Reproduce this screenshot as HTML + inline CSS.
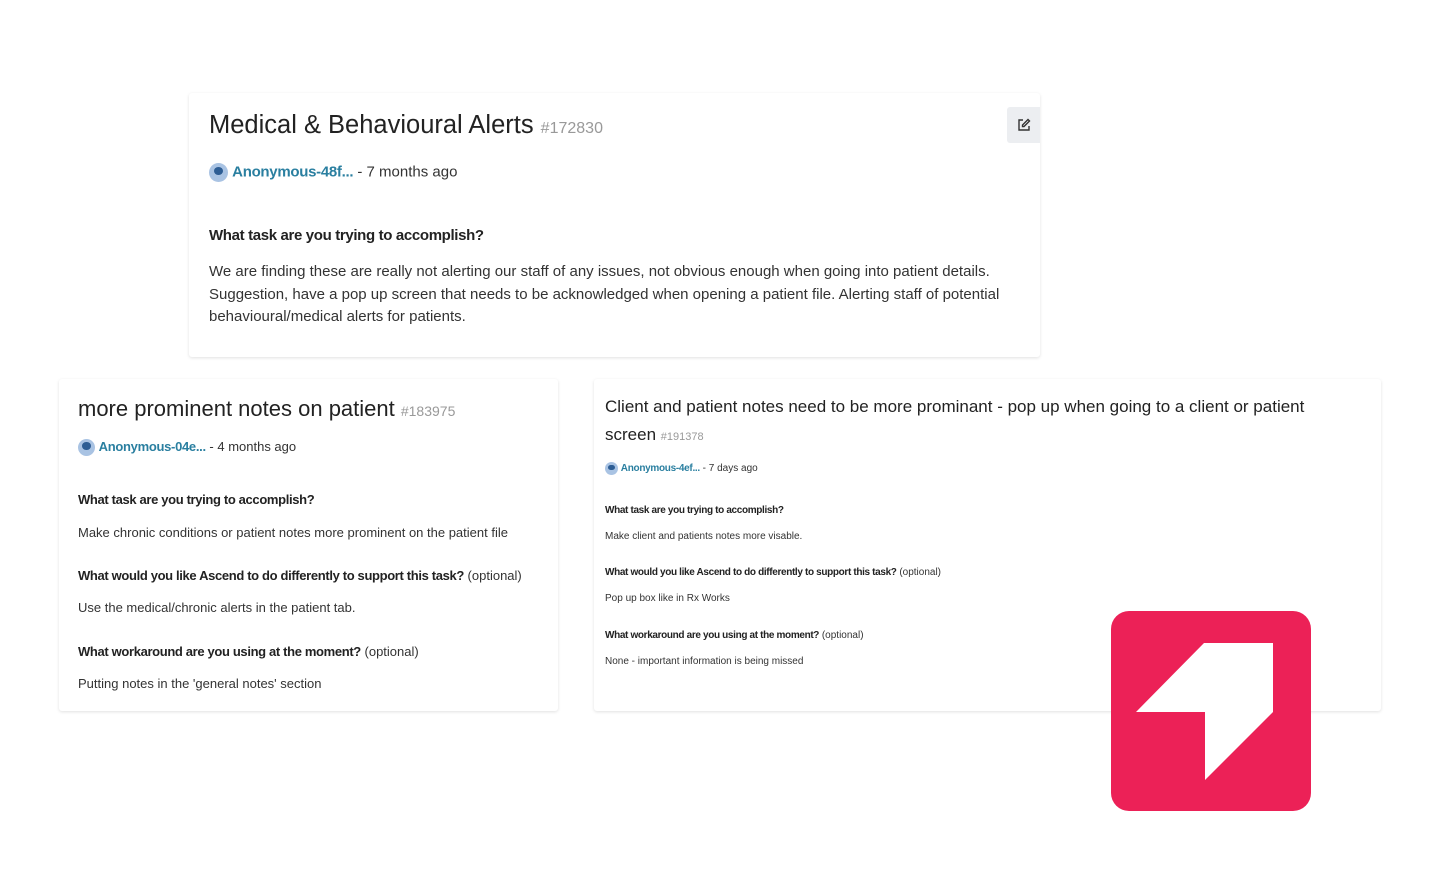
<!DOCTYPE html>
<html><head><meta charset="utf-8"><style>
body{margin:0;width:1440px;height:884px;background:#fff;font-family:"Liberation Sans",sans-serif;color:#333;position:relative;overflow:hidden}
.card{position:absolute;background:#fff;box-shadow:0 1px 3px rgba(0,0,0,.12);border-radius:3px}
.t{position:absolute;white-space:nowrap}
.id{color:#999}
.a{color:#2a7fa0;font-weight:bold;letter-spacing:-.3px}
.av{display:inline-block;border-radius:50%;background:#a9c3e3;vertical-align:middle;position:relative;overflow:hidden}
.av:after{content:"";position:absolute;left:25%;top:20%;width:50%;height:45%;border-radius:50%;background:#2d5d94}
b{font-weight:bold;color:#222;letter-spacing:-.35px}
</style></head><body>
<div class="card" style="left:189px;top:93px;width:851px;height:264px">
<div style="position:absolute;right:0;top:14px;width:33px;height:36px;background:#eceef1;border-radius:3px 0 0 3px">
<svg width="14" height="14" viewBox="0 0 14 14" style="position:absolute;left:10px;top:11px" fill="none" stroke="#333" stroke-width="1.4"><path d="M6 2H2v10h10V8"/><path d="M11 1.5l1.5 1.5L7 8.5H5.5V7z"/></svg></div>
<div class="t" style="left:20px;top:18px;font-size:25.5px;color:#222">Medical &amp; Behavioural Alerts <span class="id" style="font-size:16px">#172830</span></div>
<div class="t" style="left:20px;top:70px;font-size:15px"><span class="av" style="width:19px;height:19px"></span> <span class="a">Anonymous-48f...</span> - 7 months ago</div>
<div class="t" style="left:20px;top:134px;font-size:15px"><b>What task are you trying to accomplish?</b></div>
<div style="position:absolute;left:20px;top:168px;width:820px;font-size:15px;line-height:22.5px">We are finding these are really not alerting our staff of any issues, not obvious enough when going into patient details. Suggestion, have a pop up screen that needs to be acknowledged when opening a patient file. Alerting staff of potential behavioural/medical alerts for patients.</div>
</div>
<div class="card" style="left:59px;top:379px;width:499px;height:332px">
<div class="t" style="left:19px;top:17px;font-size:22px;color:#222">more prominent notes on patient <span class="id" style="font-size:14px">#183975</span></div>
<div class="t" style="left:19px;top:60px;font-size:13px"><span class="av" style="width:17px;height:17px"></span> <span class="a">Anonymous-04e...</span> - 4 months ago</div>
<div class="t" style="left:19px;top:113px;font-size:13px"><b>What task are you trying to accomplish?</b></div>
<div class="t" style="left:19px;top:146px;font-size:13px">Make chronic conditions or patient notes more prominent on the patient file</div>
<div class="t" style="left:19px;top:189px;font-size:13px"><b>What would you like Ascend to do differently to support this task?</b> (optional)</div>
<div class="t" style="left:19px;top:221px;font-size:13px">Use the medical/chronic alerts in the patient tab.</div>
<div class="t" style="left:19px;top:265px;font-size:13px"><b>What workaround are you using at the moment?</b> (optional)</div>
<div class="t" style="left:19px;top:297px;font-size:13px">Putting notes in the 'general notes' section</div>
</div>
<div class="card" style="left:594px;top:379px;width:787px;height:332px">
<div style="position:absolute;left:11px;top:14px;width:750px;font-size:17px;line-height:28px;color:#222">Client and patient notes need to be more prominant - pop up when going to a client or patient screen <span class="id" style="font-size:11px">#191378</span></div>
<div class="t" style="left:11px;top:83px;font-size:10px"><span class="av" style="width:13px;height:13px"></span> <span class="a">Anonymous-4ef...</span> - 7 days ago</div>
<div class="t" style="left:11px;top:126px;font-size:10px"><b>What task are you trying to accomplish?</b></div>
<div class="t" style="left:11px;top:152px;font-size:10px">Make client and patients notes more visable.</div>
<div class="t" style="left:11px;top:188px;font-size:10px"><b>What would you like Ascend to do differently to support this task?</b> (optional)</div>
<div class="t" style="left:11px;top:214px;font-size:10px">Pop up box like in Rx Works</div>
<div class="t" style="left:11px;top:251px;font-size:10px"><b>What workaround are you using at the moment?</b> (optional)</div>
<div class="t" style="left:11px;top:277px;font-size:10px">None - important information is being missed</div>
</div>
<svg style="position:absolute;left:1111px;top:611px" width="200" height="200" viewBox="0 0 200 200"><rect width="200" height="200" rx="18" fill="#ec2157"/><path d="M93 32H162V101L94 169V101H25Z" fill="#fff"/></svg>
</body></html>
